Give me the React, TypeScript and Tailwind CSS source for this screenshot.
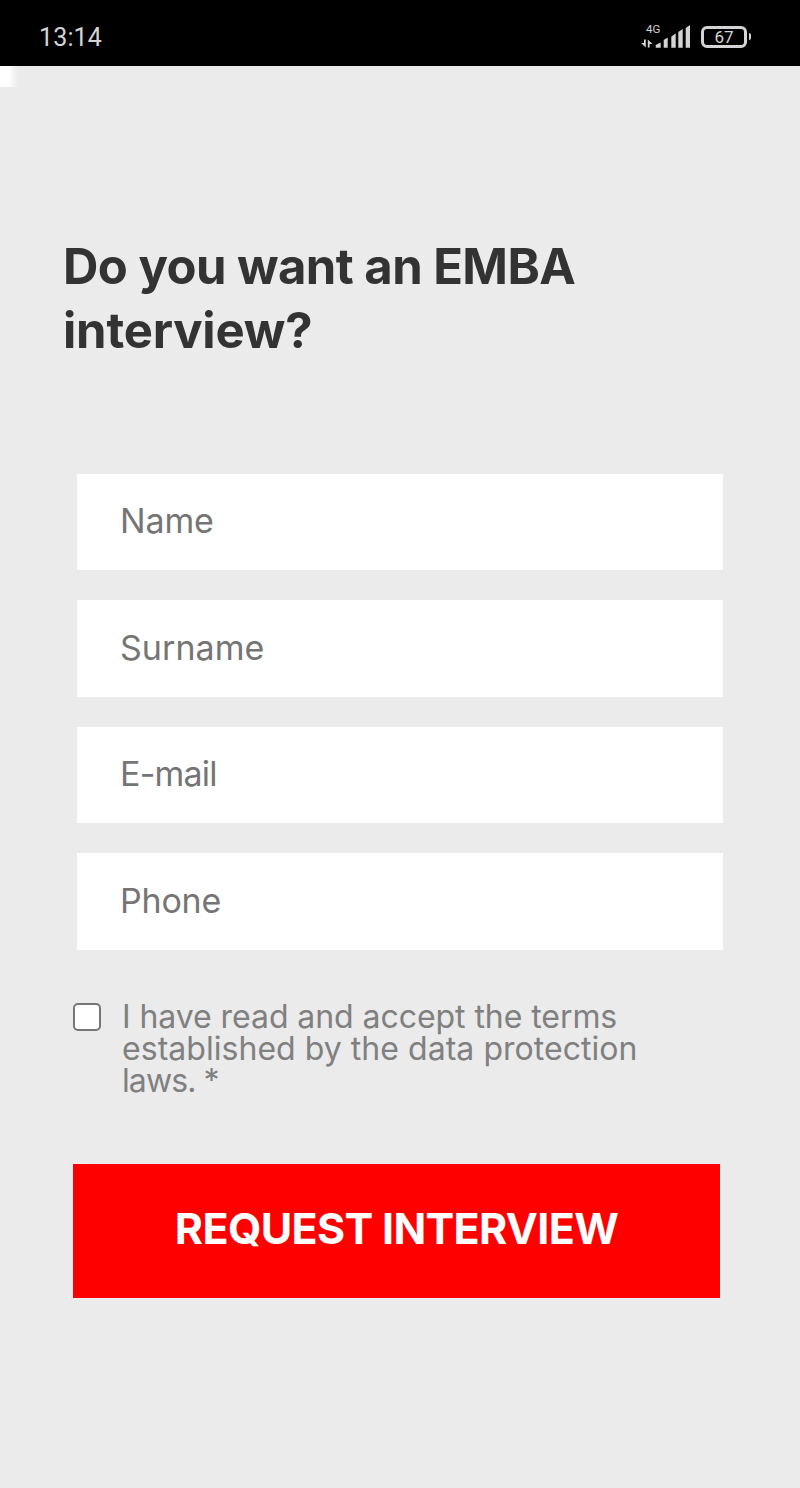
import { useState } from "react";

const fields = [
  { name: "name", label: "Name", type: "text", spacing: "placeholder:tracking-[-0.15px]" },
  { name: "surname", label: "Surname", type: "text", spacing: "placeholder:tracking-[0.05px]" },
  { name: "email", label: "E-mail", type: "email", spacing: "placeholder:tracking-[-0.8px]" },
  { name: "phone", label: "Phone", type: "tel", spacing: "placeholder:tracking-[-0.2px]" },
];

function StatusBar() {
  return (
    <header className="flex h-[66px] items-center justify-between bg-black pt-[7px] pl-[39px] pr-[49px] font-[Roboto,sans-serif] text-[#d4d4d4]">
      <span className="pt-px text-[25px] leading-none tracking-[0.15px]">13:14</span>
      <div className="flex items-center gap-[10px]">
        <div className="flex flex-col items-start">
          <span className="pl-[5px] text-[11.500px] leading-[8px]">4G</span>
          {/* Data arrows and signal bars */}
          <svg width="50" height="23" viewBox="0 0 50 23" fill="currentColor" className="-mt-[8px]">
            <path d="M3 14.500h1.800v8l-4.800-4.500h3zM6.800 22.500h1.800v-3.500h3l-4.800-4.500z" />
            <path d="M14.700 20l5-2.500v5.300h-5zM22.700 15l4-2.500v10.300h-4zM30.300 11.500l4.400-3v14.300h-4.400zM37.300 7l4.400-3v18.800h-4.400zM44.700 3l4.300-3v22.800h-4.300z" />
          </svg>
        </div>
        <div className="flex items-center gap-[2px]">
          <span className="flex h-[22px] w-[46px] items-center justify-center rounded-[6px] border-[3px] border-[#d4d4d4] pt-[2px] text-[17px] leading-none">
            67
          </span>
          <span className="h-[7px] w-[2px] rounded-r bg-[#d4d4d4]" />
        </div>
      </div>
    </header>
  );
}

export default function App() {
  const [accepted, setAccepted] = useState(false);

  return (
    <div className="min-h-[1488px] bg-[#ebebeb] font-[Inter,sans-serif]">
      <StatusBar />
      <div className="h-[21px] w-[18px] bg-linear-to-r from-white from-50% to-[#ebebeb]" />

      <main className="px-[62px] pt-[148px]">
        <h1 className="pl-px text-[49px] leading-[64px] font-bold text-[#333333]">
          <span className="block tracking-[-0.550px]">Do you want an EMBA</span>
          <span className="block tracking-[-0.2px]">interview?</span>
        </h1>

        <form onSubmit={(e) => e.preventDefault()}>
          {/* Contact fields */}
          <div className="mt-[110.800px] ml-[15px] flex w-[646px] flex-col gap-[30px]">
            {fields.map((field) => (
              <input
                key={field.name}
                name={field.name}
                type={field.type}
                placeholder={field.label}
                className={`h-[96.500px] w-full bg-white pb-[3px] pl-[43px] text-[34px] placeholder:text-[#757575] ${field.spacing}`}
              />
            ))}
          </div>

          {/* Terms */}
          <label className="mt-[51.200px] ml-[11px] flex items-start gap-[21px] text-[32px] leading-[32px] text-[#808080]">
            <input
              type="checkbox"
              checked={accepted}
              onChange={(e) => setAccepted(e.target.checked)}
              className="mt-[2px] size-[28px] shrink-0 appearance-none rounded-[5px] border-2 border-[#767676] bg-white checked:bg-[#ff0000]"
            />
            <span>
              <span className="block tracking-[-0.060px]">I have read and accept the terms</span>
              <span className="block tracking-[0.040px]">established by the data protection</span>
              <span className="block tracking-[-0.9px]">laws. *</span>
            </span>
          </label>

          <button
            type="submit"
            className="mt-[67px] ml-[11px] flex h-[134px] w-[647px] items-center justify-center bg-[#ff0000] pb-[5px] text-[43px] font-bold tracking-[-0.650px] text-white"
          >
            REQUEST INTERVIEW
          </button>
        </form>
      </main>
    </div>
  );
}
